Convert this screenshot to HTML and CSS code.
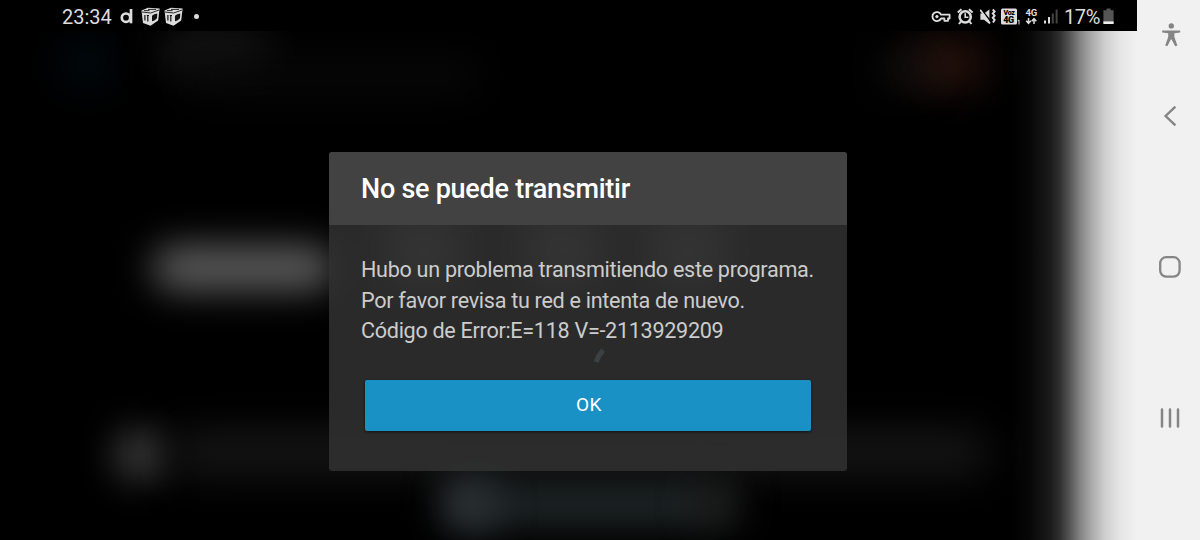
FILE: index.html
```html
<!DOCTYPE html>
<html lang="es">
<head>
  <meta charset="UTF-8" />
  <meta name="viewport" content="width=device-width, initial-scale=1.0"/>
  <title>No se puede transmitir</title>
  <link rel="stylesheet" href="styles.css">
</head>
<body>
  <div class="phone">
    <main class="screen">
      <header class="status-bar">
        <div class="status-left">
          <span class="clock">23:34</span>
          <svg class="icon-d" width="14" height="17" viewBox="0 0 14 17" fill="none" stroke="#ddd" stroke-width="2.7">
            <circle cx="6" cy="9.7" r="4.2"/>
            <path d="M11 1V15.3"/>
          </svg>
          <svg class="icon-cube" width="19" height="20" viewBox="0 0 19 20">
            <path d="M0.5 3.4L7 0.8 18.6 1.6 17.2 13.5 9.5 18.8 2 16Z" fill="#ddd"/>
            <path d="M3 3.6H8.5M7 2.4H15M1 5L9.7 6 18 3" stroke="#111" stroke-width="0.9" fill="none"/>
            <path d="M3.9 8V13.5M6.8 8.5V14.6M5.8 8.5H8" stroke="#111" stroke-width="1.2"/>
            <path d="M11 8.8L13.2 7.2 16.3 6.4 16 11.2 13.4 13.6 11 14.3Z" fill="#111"/>
          </svg>
          <svg class="icon-cube" width="19" height="20" viewBox="0 0 19 20">
            <path d="M0.5 3.4L7 0.8 18.6 1.6 17.2 13.5 9.5 18.8 2 16Z" fill="#ddd"/>
            <path d="M3 3.6H8.5M7 2.4H15M1 5L9.7 6 18 3" stroke="#111" stroke-width="0.9" fill="none"/>
            <path d="M3.9 8V13.5M6.8 8.5V14.6M5.8 8.5H8" stroke="#111" stroke-width="1.2"/>
            <path d="M11 8.8L13.2 7.2 16.3 6.4 16 11.2 13.4 13.6 11 14.3Z" fill="#111"/>
          </svg>
          <span class="more-dot"></span>
        </div>
        <div class="status-right">
          <!-- vpn -->
          <svg width="21" height="18" viewBox="0 0 21 18" fill="none" stroke="#ddd" stroke-width="1.8">
            <path d="M10 6.7H18.6V10.5H17V12.8H13.4V10.5H10A4.5 4.5 0 1 1 10 6.7Z" stroke-linejoin="round"/>
            <circle cx="5.9" cy="8.6" r="1.2" fill="#ddd" stroke-width="1"/>
          </svg>
          <!-- alarm -->
          <svg width="18" height="18" viewBox="0 0 18 18" fill="none" stroke="#ddd">
            <circle cx="8.2" cy="8.8" r="5.6" stroke-width="2.5"/>
            <path d="M0.8 4.6L4.5 1.3M15.6 4.6L11.9 1.3M3.8 13.5L2 16M12.6 13.5L14.4 16" stroke-width="2"/>
            <path d="M8.2 5.2V9.2H11.4" stroke-width="1.6"/>
          </svg>
          <!-- vibrate -->
          <svg width="16" height="18" viewBox="0 0 16 18" fill="#ddd">
            <path d="M0.4 5.5H4L9.4 1.5V16L4 11.8H0.4Z"/>
            <path d="M1.2 1L10.4 13" stroke="#000" stroke-width="1.4"/>
            <path d="M0.2 1.8L10 15.4" stroke="#ddd" stroke-width="1.7"/>
            <path d="M12.8 1.5L14.6 3.5 12.8 5.6 14.6 7.7 12.8 9.8 14.6 11.9 13 14.5" fill="none" stroke="#ddd" stroke-width="2"/>
          </svg>
          <!-- VoLTE -->
          <svg width="19" height="18" viewBox="0 0 19 18">
            <rect x="0" y="0.4" width="16" height="16" rx="1.5" fill="#ddd"/>
            <text class="volte" x="8" y="7" text-anchor="middle" font-size="7">Voz</text>
            <text class="volte" x="7.6" y="15.4" text-anchor="middle" font-size="9">4G</text>
            <path d="M16.6 12.8L18 12V16.5" fill="none" stroke="#ddd" stroke-width="1"/>
          </svg>
          <!-- 4G data -->
          <svg width="13" height="18" viewBox="0 0 13 18">
            <text class="net" x="6.2" y="8" text-anchor="middle" font-size="9.5">4G</text>
            <path d="M3.5 10V15M1.2 12.7L3.5 15.3 5.8 12.7M9 15.9V10.9M6.7 13.2L9 10.6 11.3 13.2" fill="none" stroke="#ddd" stroke-width="1.5"/>
          </svg>
          <svg width="16" height="18" viewBox="0 0 16 18">
            <rect x="1" y="12.5" width="2" height="3" fill="#ddd"/>
            <rect x="5" y="9" width="2" height="6.5" fill="#ddd"/>
            <rect x="8.8" y="5.5" width="2" height="10" fill="#444"/>
            <rect x="12.6" y="1.5" width="2" height="14" fill="#444"/>
          </svg>
          <span class="battery-text">17%</span>
          <svg class="icon-battery" width="11" height="18" viewBox="0 0 11 18">
            <path d="M3.5 0.5H7.7V2.2H10.6V16H0.4V2.2H3.5Z" fill="#555"/>
            <rect x="0.4" y="13.4" width="10.2" height="2.6" fill="#eee"/>
          </svg>
        </div>
      </header>

      <div class="content">
        <div class="backdrop">
          <span class="blur logo"></span>
          <span class="blur heading"></span>
          <span class="blur subheading"></span>
          <span class="blur badge"></span>
          <span class="blur badge-edge"></span>
          <span class="blur play"></span>
          <span class="blur option option-1"></span>
          <span class="blur option option-2"></span>
          <span class="blur option option-3"></span>
          <span class="blur avatar"></span>
          <span class="blur seekbar"></span>
          <span class="blur controls"></span>
          <span class="blur cast"></span>
          <span class="blur controls-end"></span>
          <span class="edge-fade"></span>
        </div>

        <div class="dialog">
          <h1 class="dialog-title">No se puede transmitir</h1>
          <div class="dialog-body">
            <p>Hubo un problema transmitiendo este programa.<br>Por favor revisa tu red e intenta de nuevo.<br>Código de Error:E=118 V=-2113929209</p>
            <button class="ok">OK</button>
          </div>
          <svg class="spinner" width="14" height="18" viewBox="0 0 14 18">
            <path d="M3.2 15.2Q5 8.5 10.2 3.2" fill="none" stroke="#3b4142" stroke-width="5"/>
          </svg>
        </div>
      </div>
    </main>

    <nav class="nav-bar">
      <svg class="nav-access" width="20" height="24" viewBox="0 0 20 24" fill="#858585">
        <circle cx="10.3" cy="2.9" r="2.7"/>
        <path d="M1.2 7.4H19.2V9.5L13.4 10.2V14L16.4 22.4 14.2 23.2 10.6 16.5H9.8L6.3 23.2 4.2 22.4 7.2 14V10.2L1.2 9.5Z"/>
      </svg>
      <svg class="nav-back" width="14" height="22" viewBox="0 0 14 22" fill="none" stroke="#858585" stroke-width="2.4">
        <path d="M12.4 1.6L2.6 11 12.4 20.4"/>
      </svg>
      <svg class="nav-home" width="22" height="22" viewBox="0 0 22 22" fill="none" stroke="#858585" stroke-width="2.3">
        <rect x="1.2" y="1.2" width="19.4" height="19.4" rx="6"/>
      </svg>
      <svg class="nav-recents" width="20" height="20" viewBox="0 0 20 20" stroke="#858585" stroke-width="2.5" stroke-linecap="round">
        <path d="M2 1.5V18.5M10 1.5V18.5M18 1.5V18.5"/>
      </svg>
    </nav>
  </div>
</body>
</html>
```

FILE: styles.css
```css
* {
  box-sizing: border-box;
  font-family: Roboto, 'Noto Sans', sans-serif;
  margin: 0;
  padding: 0;
}

body {
  background-color: #f1f1f1;
  overflow: hidden;
}

svg {
  display: block;
  flex: none;
}

.phone {
  display: flex;
  width: 1200px;
  height: 540px;
}

.screen {
  width: 1137px;
  display: flex;
  flex-direction: column;
}

/* status bar */
.status-bar {
  height: 31px;
  background-color: #000;
  color: #ddd;
  display: flex;
  justify-content: space-between;
  padding: 0 23px 0 62px;
}

.status-left, .status-right {
  display: flex;
  align-items: center;
  height: 33px;
}

.status-right {
  gap: 5px;
}

.clock {
  font-size: 20px;
  width: 58px;
}

.icon-d {
  margin-right: 7px;
}

.icon-cube {
  margin-right: 4px;
}

.more-dot {
  width: 5px;
  height: 5px;
  border-radius: 50%;
  background-color: #ddd;
  margin-left: 7px;
}

.volte, .net {
  font-weight: 900;
  letter-spacing: -0.3px;
}

.volte {
  fill: #000;
}

.net {
  fill: #ddd;
  font-weight: 700;
}

.battery-text {
  font-size: 20px;
  letter-spacing: -0.4px;
  width: 34px;
  white-space: nowrap;
}

/* content */
.content {
  position: relative;
  flex: 1;
  display: flex;
  justify-content: center;
  align-items: flex-start;
  padding: 121px 0 0 39px;
  background-color: #000;
}

.backdrop {
  position: absolute;
  inset: 0;
  overflow: hidden;
}

.blur {
  position: absolute;
  border-radius: 24px;
  filter: blur(20px);
}

.logo {
  left: 62px;
  top: 10px;
  width: 50px;
  height: 44px;
  background-color: #000c13;
}

.heading {
  left: 160px;
  top: 2px;
  width: 110px;
  height: 36px;
  background-color: #1c1c1c;
}

.subheading {
  left: 180px;
  top: 26px;
  width: 300px;
  height: 36px;
  background-color: #080808;
}

.badge {
  left: 910px;
  top: 10px;
  width: 76px;
  height: 46px;
  background-color: #2c150e;
}

.badge-edge {
  left: 882px;
  top: 22px;
  width: 45px;
  height: 30px;
  background-color: #151515;
}

.play {
  left: 152px;
  top: 214px;
  width: 184px;
  height: 46px;
  background-color: #5a5a5a;
  filter: blur(18px);
}

.option {
  top: 184px;
  width: 76px;
  height: 70px;
  background-color: #484848;
}

.option-1 {
  left: 385px;
}

.option-2 {
  left: 525px;
}

.option-3 {
  left: 650px;
}

.avatar {
  left: 112px;
  top: 396px;
  width: 56px;
  height: 56px;
  border-radius: 50%;
  background-color: #343434;
  filter: blur(17px);
}

.seekbar {
  left: 170px;
  top: 400px;
  width: 820px;
  height: 44px;
  background-color: #161616;
}

.controls {
  left: 450px;
  top: 450px;
  width: 270px;
  height: 46px;
  background-color: #1e2526;
  filter: blur(18px);
}

.cast {
  left: 440px;
  top: 448px;
  width: 58px;
  height: 50px;
  background-color: #2e3437;
  filter: blur(18px);
}

.controls-end {
  left: 694px;
  top: 452px;
  width: 48px;
  height: 44px;
  background-color: #202020;
  filter: blur(18px);
}

.edge-fade {
  position: absolute;
  top: 0;
  right: 0;
  width: 127px;
  height: 100%;
  background: linear-gradient(to right, rgba(241,241,241,0) 0, rgba(241,241,241,0.03) 20px, rgba(241,241,241,0.11) 40px, rgba(241,241,241,0.19) 49px, rgba(241,241,241,0.36) 60px, rgba(241,241,241,0.54) 70px, rgba(241,241,241,0.71) 82px, rgba(241,241,241,0.86) 95px, rgba(241,241,241,0.95) 110px, #f1f1f1 127px);
}

/* dialog */
.dialog {
  position: relative;
  width: 518px;
  height: 319px;
  border-radius: 3px;
  overflow: hidden;
  background-color: rgba(49,49,49,0.86);
}

.dialog-title {
  height: 73px;
  padding: 1px 0 0 32px;
  background-color: #424242;
  color: #fff;
  font-size: 27px;
  font-weight: 500;
  letter-spacing: -0.26px;
  line-height: 73px;
}

.dialog-body {
  padding: 30px 32px 0;
}

.dialog-body p {
  color: #ccc;
  font-size: 21.6px;
  letter-spacing: -0.3px;
  line-height: 30.6px;
  white-space: nowrap;
}

.ok {
  display: block;
  width: 446px;
  height: 51px;
  margin: 33.6px 0 0 4px;
  border: none;
  border-radius: 2px;
  background-color: #1991c4;
  color: #fff;
  font-size: 19px;
  letter-spacing: 0.6px;
  padding: 0 0 2px 2px;
  box-shadow: 0 1px 3px rgba(0,0,0,0.6);
}

.spinner {
  position: absolute;
  left: 264px;
  top: 195px;
}

/* navigation */
.nav-bar {
  width: 63px;
  display: flex;
  flex-direction: column;
  align-items: center;
  padding: 23px 0 0 3px;
}

.nav-access {
  margin-left: 1px;
}

.nav-back {
  margin-top: 58px;
}

.nav-home {
  margin-top: 129px;
}

.nav-recents {
  margin-top: 130px;
}
```
